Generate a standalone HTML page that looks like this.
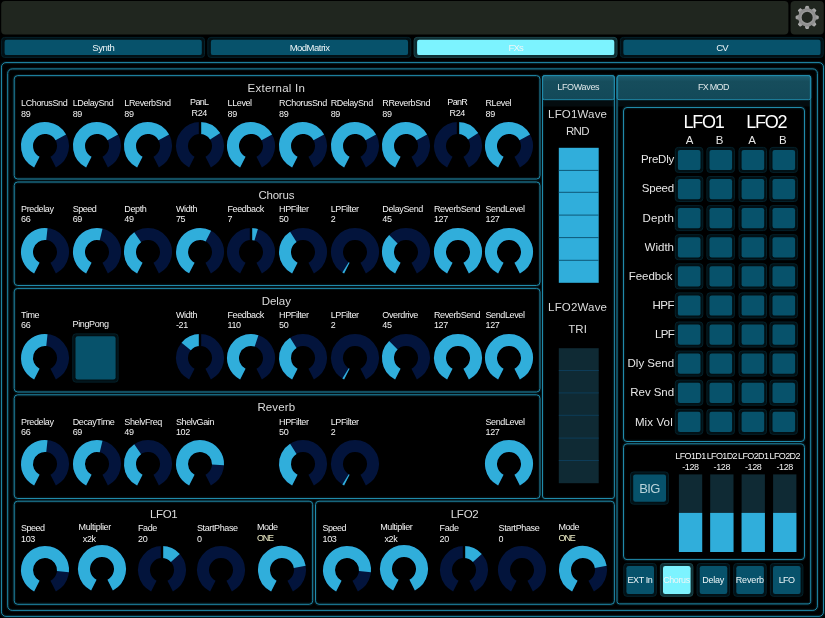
<!DOCTYPE html><html><head><meta charset="utf-8"><style>
*{box-sizing:border-box;margin:0;padding:0}
html,body{width:825px;height:618px;background:#000;overflow:hidden}
body{position:relative;font-family:"Liberation Sans",sans-serif;color:#f2f2f2}
.pn{position:absolute;border:1px solid #208aaa;border-radius:4px}
.box{position:absolute;border:1px solid #208aaa;border-radius:3px}
.hd{position:absolute;border:1px solid #208aaa;border-radius:3px 3px 0 0;background:linear-gradient(#0c4558,#125269);font-size:9px;line-height:23px;text-align:center;color:#e8f0f2}
.sh{position:absolute;background:#04141a}
.k{position:absolute}
.ct{position:absolute;white-space:nowrap;will-change:transform}
.lb,.tt,.wt,.big,.ab,.rl,.bt,.hd{will-change:transform}
.lb{position:absolute;font-size:9px;line-height:10px;white-space:nowrap;letter-spacing:-0.38px;color:#f4f4f4}
.lb.c{text-align:center}
.y{color:#ecebc6}
.tt{position:absolute;font-size:11.2px;line-height:14px;text-align:center;color:#dcdcdc;letter-spacing:0.4px;margin-left:-1.5px;margin-top:0.6px}
.wt{position:absolute;font-size:12px;line-height:14px;text-align:center;color:#dcdcdc;letter-spacing:-0.3px}
.big{position:absolute;font-size:18px;line-height:20px;text-align:center;color:#fff;letter-spacing:-0.8px}
.ab{position:absolute;font-size:11px;line-height:12px;text-align:center;color:#e6e6e6}
.rl{position:absolute;font-size:12px;line-height:14px;text-align:right;color:#e6e6e6;letter-spacing:-0.3px}
.bo{position:absolute;background:#03181f;border-radius:3px}
.bo.on{background:#143a40}
.bi{position:absolute;background:#07526b;border-radius:2px}
.bi.on{background:#7cf3ff}
.bt{font-size:9px;text-align:center;color:#eef6f8;letter-spacing:-0.2px;white-space:nowrap}
</style></head><body>
<svg style="position:absolute;left:0;top:0" width="825" height="618" viewBox="0 0 825 618"><rect x="72.80" y="333.90" width="45.30" height="48.20" rx="3" fill="#021015" stroke="#04212a"/><rect x="75.50" y="336.20" width="40.10" height="43.20" rx="2.2" fill="#07526b"/><defs><linearGradient id="hg" x1="0" y1="0" x2="0" y2="1"><stop offset="0" stop-color="#1d5d70"/><stop offset="0.25" stop-color="#164d5c"/><stop offset="1" stop-color="#134959"/></linearGradient></defs><rect x="543" y="100.2" width="71" height="6.3" fill="#040c0f"/><rect x="542.5" y="75.5" width="71.9" height="24.2" rx="2" fill="url(#hg)" stroke="#208aaa"/><rect x="558.8" y="147.8" width="39.9" height="135" fill="#30aedb"/><rect x="558.8" y="169.9" width="39.9" height="1" fill="#0e5878"/><rect x="558.8" y="191.8" width="39.9" height="1" fill="#0e5878"/><rect x="558.8" y="214.6" width="39.9" height="1" fill="#0e5878"/><rect x="558.8" y="237.1" width="39.9" height="1" fill="#0e5878"/><rect x="558.8" y="259.8" width="39.9" height="1" fill="#0e5878"/><rect x="558.8" y="348.2" width="39.9" height="135" fill="#0f2a34"/><rect x="558.8" y="370.0" width="39.9" height="1" fill="#0d3c58"/><rect x="558.8" y="392.4" width="39.9" height="1" fill="#0d3c58"/><rect x="558.8" y="414.8" width="39.9" height="1" fill="#0d3c58"/><rect x="558.8" y="437.6" width="39.9" height="1" fill="#0d3c58"/><rect x="558.8" y="460.0" width="39.9" height="1" fill="#0d3c58"/><rect x="617.5" y="100.2" width="193" height="6.3" fill="#040c0f"/><rect x="617.0" y="75.5" width="193.7" height="24.2" rx="2" fill="url(#hg)" stroke="#208aaa"/><rect x="675.30" y="147.40" width="27.50" height="25.00" rx="3" fill="#021015" stroke="#04212a"/><rect x="677.90" y="149.90" width="22.60" height="20.20" rx="2.2" fill="#07526b"/><rect x="706.90" y="147.40" width="27.50" height="25.00" rx="3" fill="#021015" stroke="#04212a"/><rect x="709.50" y="149.90" width="22.60" height="20.20" rx="2.2" fill="#07526b"/><rect x="739.00" y="147.40" width="27.50" height="25.00" rx="3" fill="#021015" stroke="#04212a"/><rect x="741.60" y="149.90" width="22.60" height="20.20" rx="2.2" fill="#07526b"/><rect x="769.90" y="147.40" width="27.50" height="25.00" rx="3" fill="#021015" stroke="#04212a"/><rect x="772.50" y="149.90" width="22.60" height="20.20" rx="2.2" fill="#07526b"/><rect x="675.30" y="176.50" width="27.50" height="25.00" rx="3" fill="#021015" stroke="#04212a"/><rect x="677.90" y="179.00" width="22.60" height="20.20" rx="2.2" fill="#07526b"/><rect x="706.90" y="176.50" width="27.50" height="25.00" rx="3" fill="#021015" stroke="#04212a"/><rect x="709.50" y="179.00" width="22.60" height="20.20" rx="2.2" fill="#07526b"/><rect x="739.00" y="176.50" width="27.50" height="25.00" rx="3" fill="#021015" stroke="#04212a"/><rect x="741.60" y="179.00" width="22.60" height="20.20" rx="2.2" fill="#07526b"/><rect x="769.90" y="176.50" width="27.50" height="25.00" rx="3" fill="#021015" stroke="#04212a"/><rect x="772.50" y="179.00" width="22.60" height="20.20" rx="2.2" fill="#07526b"/><rect x="675.30" y="205.60" width="27.50" height="25.00" rx="3" fill="#021015" stroke="#04212a"/><rect x="677.90" y="208.10" width="22.60" height="20.20" rx="2.2" fill="#07526b"/><rect x="706.90" y="205.60" width="27.50" height="25.00" rx="3" fill="#021015" stroke="#04212a"/><rect x="709.50" y="208.10" width="22.60" height="20.20" rx="2.2" fill="#07526b"/><rect x="739.00" y="205.60" width="27.50" height="25.00" rx="3" fill="#021015" stroke="#04212a"/><rect x="741.60" y="208.10" width="22.60" height="20.20" rx="2.2" fill="#07526b"/><rect x="769.90" y="205.60" width="27.50" height="25.00" rx="3" fill="#021015" stroke="#04212a"/><rect x="772.50" y="208.10" width="22.60" height="20.20" rx="2.2" fill="#07526b"/><rect x="675.30" y="234.70" width="27.50" height="25.00" rx="3" fill="#021015" stroke="#04212a"/><rect x="677.90" y="237.20" width="22.60" height="20.20" rx="2.2" fill="#07526b"/><rect x="706.90" y="234.70" width="27.50" height="25.00" rx="3" fill="#021015" stroke="#04212a"/><rect x="709.50" y="237.20" width="22.60" height="20.20" rx="2.2" fill="#07526b"/><rect x="739.00" y="234.70" width="27.50" height="25.00" rx="3" fill="#021015" stroke="#04212a"/><rect x="741.60" y="237.20" width="22.60" height="20.20" rx="2.2" fill="#07526b"/><rect x="769.90" y="234.70" width="27.50" height="25.00" rx="3" fill="#021015" stroke="#04212a"/><rect x="772.50" y="237.20" width="22.60" height="20.20" rx="2.2" fill="#07526b"/><rect x="675.30" y="263.80" width="27.50" height="25.00" rx="3" fill="#021015" stroke="#04212a"/><rect x="677.90" y="266.30" width="22.60" height="20.20" rx="2.2" fill="#07526b"/><rect x="706.90" y="263.80" width="27.50" height="25.00" rx="3" fill="#021015" stroke="#04212a"/><rect x="709.50" y="266.30" width="22.60" height="20.20" rx="2.2" fill="#07526b"/><rect x="739.00" y="263.80" width="27.50" height="25.00" rx="3" fill="#021015" stroke="#04212a"/><rect x="741.60" y="266.30" width="22.60" height="20.20" rx="2.2" fill="#07526b"/><rect x="769.90" y="263.80" width="27.50" height="25.00" rx="3" fill="#021015" stroke="#04212a"/><rect x="772.50" y="266.30" width="22.60" height="20.20" rx="2.2" fill="#07526b"/><rect x="675.30" y="292.90" width="27.50" height="25.00" rx="3" fill="#021015" stroke="#04212a"/><rect x="677.90" y="295.40" width="22.60" height="20.20" rx="2.2" fill="#07526b"/><rect x="706.90" y="292.90" width="27.50" height="25.00" rx="3" fill="#021015" stroke="#04212a"/><rect x="709.50" y="295.40" width="22.60" height="20.20" rx="2.2" fill="#07526b"/><rect x="739.00" y="292.90" width="27.50" height="25.00" rx="3" fill="#021015" stroke="#04212a"/><rect x="741.60" y="295.40" width="22.60" height="20.20" rx="2.2" fill="#07526b"/><rect x="769.90" y="292.90" width="27.50" height="25.00" rx="3" fill="#021015" stroke="#04212a"/><rect x="772.50" y="295.40" width="22.60" height="20.20" rx="2.2" fill="#07526b"/><rect x="675.30" y="322.00" width="27.50" height="25.00" rx="3" fill="#021015" stroke="#04212a"/><rect x="677.90" y="324.50" width="22.60" height="20.20" rx="2.2" fill="#07526b"/><rect x="706.90" y="322.00" width="27.50" height="25.00" rx="3" fill="#021015" stroke="#04212a"/><rect x="709.50" y="324.50" width="22.60" height="20.20" rx="2.2" fill="#07526b"/><rect x="739.00" y="322.00" width="27.50" height="25.00" rx="3" fill="#021015" stroke="#04212a"/><rect x="741.60" y="324.50" width="22.60" height="20.20" rx="2.2" fill="#07526b"/><rect x="769.90" y="322.00" width="27.50" height="25.00" rx="3" fill="#021015" stroke="#04212a"/><rect x="772.50" y="324.50" width="22.60" height="20.20" rx="2.2" fill="#07526b"/><rect x="675.30" y="351.10" width="27.50" height="25.00" rx="3" fill="#021015" stroke="#04212a"/><rect x="677.90" y="353.60" width="22.60" height="20.20" rx="2.2" fill="#07526b"/><rect x="706.90" y="351.10" width="27.50" height="25.00" rx="3" fill="#021015" stroke="#04212a"/><rect x="709.50" y="353.60" width="22.60" height="20.20" rx="2.2" fill="#07526b"/><rect x="739.00" y="351.10" width="27.50" height="25.00" rx="3" fill="#021015" stroke="#04212a"/><rect x="741.60" y="353.60" width="22.60" height="20.20" rx="2.2" fill="#07526b"/><rect x="769.90" y="351.10" width="27.50" height="25.00" rx="3" fill="#021015" stroke="#04212a"/><rect x="772.50" y="353.60" width="22.60" height="20.20" rx="2.2" fill="#07526b"/><rect x="675.30" y="380.20" width="27.50" height="25.00" rx="3" fill="#021015" stroke="#04212a"/><rect x="677.90" y="382.70" width="22.60" height="20.20" rx="2.2" fill="#07526b"/><rect x="706.90" y="380.20" width="27.50" height="25.00" rx="3" fill="#021015" stroke="#04212a"/><rect x="709.50" y="382.70" width="22.60" height="20.20" rx="2.2" fill="#07526b"/><rect x="739.00" y="380.20" width="27.50" height="25.00" rx="3" fill="#021015" stroke="#04212a"/><rect x="741.60" y="382.70" width="22.60" height="20.20" rx="2.2" fill="#07526b"/><rect x="769.90" y="380.20" width="27.50" height="25.00" rx="3" fill="#021015" stroke="#04212a"/><rect x="772.50" y="382.70" width="22.60" height="20.20" rx="2.2" fill="#07526b"/><rect x="675.30" y="409.30" width="27.50" height="25.00" rx="3" fill="#021015" stroke="#04212a"/><rect x="677.90" y="411.80" width="22.60" height="20.20" rx="2.2" fill="#07526b"/><rect x="706.90" y="409.30" width="27.50" height="25.00" rx="3" fill="#021015" stroke="#04212a"/><rect x="709.50" y="411.80" width="22.60" height="20.20" rx="2.2" fill="#07526b"/><rect x="739.00" y="409.30" width="27.50" height="25.00" rx="3" fill="#021015" stroke="#04212a"/><rect x="741.60" y="411.80" width="22.60" height="20.20" rx="2.2" fill="#07526b"/><rect x="769.90" y="409.30" width="27.50" height="25.00" rx="3" fill="#021015" stroke="#04212a"/><rect x="772.50" y="411.80" width="22.60" height="20.20" rx="2.2" fill="#07526b"/><rect x="678.9" y="474.4" width="23.3" height="77.6" fill="#0f2a34"/><rect x="678.9" y="512.9" width="23.3" height="39.1" fill="#30aedb"/><rect x="710.2" y="474.4" width="23.3" height="77.6" fill="#0f2a34"/><rect x="710.2" y="512.9" width="23.3" height="39.1" fill="#30aedb"/><rect x="741.6" y="474.4" width="23.3" height="77.6" fill="#0f2a34"/><rect x="741.6" y="512.9" width="23.3" height="39.1" fill="#30aedb"/><rect x="773.1" y="474.4" width="23.3" height="77.6" fill="#0f2a34"/><rect x="773.1" y="512.9" width="23.3" height="39.1" fill="#30aedb"/><rect x="630.50" y="472.00" width="37.90" height="32.20" rx="3" fill="#021015" stroke="#04212a"/><rect x="633.20" y="474.40" width="32.80" height="27.40" rx="2.2" fill="#07526b"/><rect x="623.80" y="563.50" width="32.50" height="32.80" rx="3" fill="#021015" stroke="#04212a"/><rect x="626.40" y="566.00" width="27.60" height="28.00" rx="2.2" fill="#07526b"/><rect x="660.40" y="563.50" width="32.50" height="32.80" rx="3" fill="#0e2e33" stroke="#1b4349"/><rect x="663.00" y="566.00" width="27.60" height="28.00" rx="2.2" fill="#7cf3ff"/><rect x="697.10" y="563.50" width="32.50" height="32.80" rx="3" fill="#021015" stroke="#04212a"/><rect x="699.70" y="566.00" width="27.60" height="28.00" rx="2.2" fill="#07526b"/><rect x="733.70" y="563.50" width="32.50" height="32.80" rx="3" fill="#021015" stroke="#04212a"/><rect x="736.30" y="566.00" width="27.60" height="28.00" rx="2.2" fill="#07526b"/><rect x="770.40" y="563.50" width="32.50" height="32.80" rx="3" fill="#021015" stroke="#04212a"/><rect x="773.00" y="566.00" width="27.60" height="28.00" rx="2.2" fill="#07526b"/><rect x="1.2" y="1" width="787.2" height="33.4" rx="4" fill="#20261f"/><rect x="790.6" y="1" width="33.2" height="33.4" rx="4" fill="#20261f"/><defs><radialGradient id="gg" cx="0" cy="0" r="11.6" gradientUnits="userSpaceOnUse"><stop offset="0.48" stop-color="#9e9e9e"/><stop offset="0.68" stop-color="#8a8a8a"/><stop offset="1" stop-color="#b6b6b6"/></radialGradient></defs><g transform="translate(807.15,17.4)" fill="url(#gg)" stroke="url(#gg)"><polygon points="-1.9,-8.4 -1.2,-11.0 1.2,-11.0 1.9,-8.4" stroke-width="1.0" stroke-linejoin="round" transform="rotate(0)"/><polygon points="-1.9,-8.4 -1.2,-11.0 1.2,-11.0 1.9,-8.4" stroke-width="1.0" stroke-linejoin="round" transform="rotate(45)"/><polygon points="-1.9,-8.4 -1.2,-11.0 1.2,-11.0 1.9,-8.4" stroke-width="1.0" stroke-linejoin="round" transform="rotate(90)"/><polygon points="-1.9,-8.4 -1.2,-11.0 1.2,-11.0 1.9,-8.4" stroke-width="1.0" stroke-linejoin="round" transform="rotate(135)"/><polygon points="-1.9,-8.4 -1.2,-11.0 1.2,-11.0 1.9,-8.4" stroke-width="1.0" stroke-linejoin="round" transform="rotate(180)"/><polygon points="-1.9,-8.4 -1.2,-11.0 1.2,-11.0 1.9,-8.4" stroke-width="1.0" stroke-linejoin="round" transform="rotate(225)"/><polygon points="-1.9,-8.4 -1.2,-11.0 1.2,-11.0 1.9,-8.4" stroke-width="1.0" stroke-linejoin="round" transform="rotate(270)"/><polygon points="-1.9,-8.4 -1.2,-11.0 1.2,-11.0 1.9,-8.4" stroke-width="1.0" stroke-linejoin="round" transform="rotate(315)"/><circle r="7.3" fill="none" stroke-width="3.5"/></g><rect x="1.60" y="37.40" width="202.90" height="20.00" rx="3" fill="#021015" stroke="#04212a"/><rect x="4.60" y="39.80" width="197.20" height="15.30" rx="2.2" fill="#07526b"/><rect x="207.85" y="37.40" width="202.90" height="20.00" rx="3" fill="#021015" stroke="#04212a"/><rect x="210.85" y="39.80" width="197.20" height="15.30" rx="2.2" fill="#07526b"/><rect x="414.10" y="37.40" width="202.90" height="20.00" rx="3" fill="#0e2e33" stroke="#1b4349"/><rect x="417.10" y="39.80" width="197.20" height="15.30" rx="2.2" fill="#7cf3ff"/><rect x="620.35" y="37.40" width="202.90" height="20.00" rx="3" fill="#021015" stroke="#04212a"/><rect x="623.35" y="39.80" width="197.20" height="15.30" rx="2.2" fill="#07526b"/></svg>
<svg style="position:absolute;left:0;top:0" width="825" height="618" viewBox="0 0 825 618" fill="none" stroke="#208aaa" stroke-width="1"><g stroke-width="3.4" opacity="0.13"><rect x="14.20" y="75.60" width="525.80" height="103.40" rx="3.5"/><rect x="14.20" y="182.00" width="525.80" height="103.50" rx="3.5"/><rect x="14.20" y="288.40" width="525.80" height="103.60" rx="3.5"/><rect x="14.20" y="394.80" width="525.80" height="103.70" rx="3.5"/><rect x="14.20" y="501.20" width="298.50" height="103.10" rx="3.5"/><rect x="315.50" y="501.20" width="298.90" height="103.10" rx="3.5"/><rect x="542.50" y="75.50" width="71.90" height="423.00" rx="2.5"/><rect x="617.00" y="75.50" width="193.70" height="528.40" rx="2.5"/><rect x="623.50" y="107.50" width="181.00" height="334.00" rx="3.5"/><rect x="623.50" y="443.80" width="181.00" height="115.80" rx="3.5"/><rect x="1.46" y="62.60" width="822.04" height="553.80" rx="4.5"/><rect x="7.70" y="68.90" width="809.70" height="541.50" rx="4.5"/></g><rect x="14.20" y="75.60" width="525.80" height="103.40" rx="3.5"/><rect x="14.20" y="182.00" width="525.80" height="103.50" rx="3.5"/><rect x="14.20" y="288.40" width="525.80" height="103.60" rx="3.5"/><rect x="14.20" y="394.80" width="525.80" height="103.70" rx="3.5"/><rect x="14.20" y="501.20" width="298.50" height="103.10" rx="3.5"/><rect x="315.50" y="501.20" width="298.90" height="103.10" rx="3.5"/><rect x="542.50" y="75.50" width="71.90" height="423.00" rx="2.5"/><rect x="617.00" y="75.50" width="193.70" height="528.40" rx="2.5"/><rect x="623.50" y="107.50" width="181.00" height="334.00" rx="3.5"/><rect x="623.50" y="443.80" width="181.00" height="115.80" rx="3.5"/><rect x="1.46" y="62.60" width="822.04" height="553.80" rx="4.5"/><rect x="7.70" y="68.90" width="809.70" height="541.50" rx="4.5"/></svg>
<div class="ct" style="left:247px;top:80px;font-size:11.5px;line-height:15px;letter-spacing:0.22px;color:#dcdcdc;transform:translate(0.60px,0.80px)">External In</div>
<svg class="k" style="left:19.0px;top:120.15px" width="52" height="52" viewBox="0 0 52 52"><path d="M17.83 42.04A18 18 0 1 1 34.17 42.04" stroke="#03143c" stroke-width="12" fill="none"/><path d="M17.83 42.04A18 18 0 1 1 41.81 17.39" stroke="#30aedb" stroke-width="12" fill="none"/></svg>
<div class="lb " style="left:21px;top:98px;transform:translate(0.10px,0.00px)">LChorusSnd</div>
<div class="lb " style="left:21px;top:108px;transform:translate(0.10px,0.50px)">89</div>
<svg class="k" style="left:70.6px;top:120.15px" width="52" height="52" viewBox="0 0 52 52"><path d="M17.83 42.04A18 18 0 1 1 34.17 42.04" stroke="#03143c" stroke-width="12" fill="none"/><path d="M17.83 42.04A18 18 0 1 1 41.81 17.39" stroke="#30aedb" stroke-width="12" fill="none"/></svg>
<div class="lb " style="left:72px;top:98px;transform:translate(0.70px,0.00px)">LDelaySnd</div>
<div class="lb " style="left:72px;top:108px;transform:translate(0.70px,0.50px)">89</div>
<svg class="k" style="left:122.19999999999999px;top:120.15px" width="52" height="52" viewBox="0 0 52 52"><path d="M17.83 42.04A18 18 0 1 1 34.17 42.04" stroke="#03143c" stroke-width="12" fill="none"/><path d="M17.83 42.04A18 18 0 1 1 41.81 17.39" stroke="#30aedb" stroke-width="12" fill="none"/></svg>
<div class="lb " style="left:124px;top:98px;transform:translate(0.30px,0.00px)">LReverbSnd</div>
<div class="lb " style="left:124px;top:108px;transform:translate(0.30px,0.50px)">89</div>
<svg class="k" style="left:173.8px;top:120.15px" width="52" height="52" viewBox="0 0 52 52"><path d="M17.83 42.04A18 18 0 1 1 34.17 42.04" stroke="#03143c" stroke-width="12" fill="none"/><path d="M26.00 8.00A18 18 0 0 1 41.16 16.30" stroke="#30aedb" stroke-width="12" fill="none"/><rect x="24.8" y="1" width="2.4" height="14" fill="#000"/></svg>
<div class="lb c " style="left:169px;top:97px;width:60px;transform:translate(0.20px,0.00px);letter-spacing:-0.7px">PanL</div>
<div class="lb c " style="left:169px;top:108px;width:60px;transform:translate(0.20px,0.00px)">R24</div>
<svg class="k" style="left:225.4px;top:120.15px" width="52" height="52" viewBox="0 0 52 52"><path d="M17.83 42.04A18 18 0 1 1 34.17 42.04" stroke="#03143c" stroke-width="12" fill="none"/><path d="M17.83 42.04A18 18 0 1 1 41.81 17.39" stroke="#30aedb" stroke-width="12" fill="none"/></svg>
<div class="lb " style="left:227px;top:98px;transform:translate(0.50px,0.00px)">LLevel</div>
<div class="lb " style="left:227px;top:108px;transform:translate(0.50px,0.50px)">89</div>
<svg class="k" style="left:277.0px;top:120.15px" width="52" height="52" viewBox="0 0 52 52"><path d="M17.83 42.04A18 18 0 1 1 34.17 42.04" stroke="#03143c" stroke-width="12" fill="none"/><path d="M17.83 42.04A18 18 0 1 1 41.81 17.39" stroke="#30aedb" stroke-width="12" fill="none"/></svg>
<div class="lb " style="left:279px;top:98px;transform:translate(0.10px,0.00px)">RChorusSnd</div>
<div class="lb " style="left:279px;top:108px;transform:translate(0.10px,0.50px)">89</div>
<svg class="k" style="left:328.6px;top:120.15px" width="52" height="52" viewBox="0 0 52 52"><path d="M17.83 42.04A18 18 0 1 1 34.17 42.04" stroke="#03143c" stroke-width="12" fill="none"/><path d="M17.83 42.04A18 18 0 1 1 41.81 17.39" stroke="#30aedb" stroke-width="12" fill="none"/></svg>
<div class="lb " style="left:330px;top:98px;transform:translate(0.70px,0.00px)">RDelaySnd</div>
<div class="lb " style="left:330px;top:108px;transform:translate(0.70px,0.50px)">89</div>
<svg class="k" style="left:380.2px;top:120.15px" width="52" height="52" viewBox="0 0 52 52"><path d="M17.83 42.04A18 18 0 1 1 34.17 42.04" stroke="#03143c" stroke-width="12" fill="none"/><path d="M17.83 42.04A18 18 0 1 1 41.81 17.39" stroke="#30aedb" stroke-width="12" fill="none"/></svg>
<div class="lb " style="left:382px;top:98px;transform:translate(0.30px,0.00px)">RReverbSnd</div>
<div class="lb " style="left:382px;top:108px;transform:translate(0.30px,0.50px)">89</div>
<svg class="k" style="left:431.8px;top:120.15px" width="52" height="52" viewBox="0 0 52 52"><path d="M17.83 42.04A18 18 0 1 1 34.17 42.04" stroke="#03143c" stroke-width="12" fill="none"/><path d="M26.00 8.00A18 18 0 0 1 41.16 16.30" stroke="#30aedb" stroke-width="12" fill="none"/><rect x="24.8" y="1" width="2.4" height="14" fill="#000"/></svg>
<div class="lb c " style="left:427px;top:97px;width:60px;transform:translate(0.20px,0.00px);letter-spacing:-0.7px">PanR</div>
<div class="lb c " style="left:427px;top:108px;width:60px;transform:translate(0.20px,0.00px)">R24</div>
<svg class="k" style="left:483.40000000000003px;top:120.15px" width="52" height="52" viewBox="0 0 52 52"><path d="M17.83 42.04A18 18 0 1 1 34.17 42.04" stroke="#03143c" stroke-width="12" fill="none"/><path d="M17.83 42.04A18 18 0 1 1 41.81 17.39" stroke="#30aedb" stroke-width="12" fill="none"/></svg>
<div class="lb " style="left:485px;top:98px;transform:translate(0.50px,0.00px)">RLevel</div>
<div class="lb " style="left:485px;top:108px;transform:translate(0.50px,0.50px)">89</div>
<div class="ct" style="left:258px;top:187px;font-size:11.5px;line-height:15px;letter-spacing:-0.21px;color:#dcdcdc;transform:translate(0.40px,0.80px)">Chorus</div>
<svg class="k" style="left:19.0px;top:226.15px" width="52" height="52" viewBox="0 0 52 52"><path d="M17.83 42.04A18 18 0 1 1 34.17 42.04" stroke="#03143c" stroke-width="12" fill="none"/><path d="M17.83 42.04A18 18 0 0 1 27.89 8.10" stroke="#30aedb" stroke-width="12" fill="none"/></svg>
<div class="lb " style="left:21px;top:204px;transform:translate(0.10px,0.20px)">Predelay</div>
<div class="lb " style="left:21px;top:214px;transform:translate(0.10px,0.30px)">66</div>
<svg class="k" style="left:70.6px;top:226.15px" width="52" height="52" viewBox="0 0 52 52"><path d="M17.83 42.04A18 18 0 1 1 34.17 42.04" stroke="#03143c" stroke-width="12" fill="none"/><path d="M17.83 42.04A18 18 0 0 1 30.13 8.48" stroke="#30aedb" stroke-width="12" fill="none"/></svg>
<div class="lb " style="left:72px;top:204px;transform:translate(0.70px,0.20px);letter-spacing:-0.5px">Speed</div>
<div class="lb " style="left:72px;top:214px;transform:translate(0.70px,0.30px)">69</div>
<svg class="k" style="left:122.19999999999999px;top:226.15px" width="52" height="52" viewBox="0 0 52 52"><path d="M17.83 42.04A18 18 0 1 1 34.17 42.04" stroke="#03143c" stroke-width="12" fill="none"/><path d="M17.83 42.04A18 18 0 0 1 15.69 11.24" stroke="#30aedb" stroke-width="12" fill="none"/></svg>
<div class="lb " style="left:124px;top:204px;transform:translate(0.30px,0.20px)">Depth</div>
<div class="lb " style="left:124px;top:214px;transform:translate(0.30px,0.30px)">49</div>
<svg class="k" style="left:173.8px;top:226.15px" width="52" height="52" viewBox="0 0 52 52"><path d="M17.83 42.04A18 18 0 1 1 34.17 42.04" stroke="#03143c" stroke-width="12" fill="none"/><path d="M17.83 42.04A18 18 0 1 1 34.37 10.06" stroke="#30aedb" stroke-width="12" fill="none"/></svg>
<div class="lb " style="left:175px;top:204px;transform:translate(0.90px,0.20px)">Width</div>
<div class="lb " style="left:175px;top:214px;transform:translate(0.90px,0.30px)">75</div>
<svg class="k" style="left:225.4px;top:226.15px" width="52" height="52" viewBox="0 0 52 52"><path d="M17.83 42.04A18 18 0 1 1 34.17 42.04" stroke="#03143c" stroke-width="12" fill="none"/><path d="M26.00 8.00A18 18 0 0 1 31.18 8.76" stroke="#30aedb" stroke-width="12" fill="none"/><rect x="24.8" y="1" width="2.4" height="14" fill="#000"/></svg>
<div class="lb " style="left:227px;top:204px;transform:translate(0.50px,0.20px)">Feedback</div>
<div class="lb " style="left:227px;top:214px;transform:translate(0.50px,0.30px)">7</div>
<svg class="k" style="left:277.0px;top:226.15px" width="52" height="52" viewBox="0 0 52 52"><path d="M17.83 42.04A18 18 0 1 1 34.17 42.04" stroke="#03143c" stroke-width="12" fill="none"/><path d="M17.83 42.04A18 18 0 0 1 16.32 10.82" stroke="#30aedb" stroke-width="12" fill="none"/></svg>
<div class="lb " style="left:279px;top:204px;transform:translate(0.10px,0.20px)">HPFilter</div>
<div class="lb " style="left:279px;top:214px;transform:translate(0.10px,0.30px)">50</div>
<svg class="k" style="left:328.6px;top:226.15px" width="52" height="52" viewBox="0 0 52 52"><path d="M17.83 42.04A18 18 0 1 1 34.17 42.04" stroke="#03143c" stroke-width="12" fill="none"/><path d="M17.83 42.04A18 18 0 0 1 16.51 41.29" stroke="#30aedb" stroke-width="12" fill="none"/></svg>
<div class="lb " style="left:330px;top:204px;transform:translate(0.70px,0.20px)">LPFilter</div>
<div class="lb " style="left:330px;top:214px;transform:translate(0.70px,0.30px)">2</div>
<svg class="k" style="left:380.2px;top:226.15px" width="52" height="52" viewBox="0 0 52 52"><path d="M17.83 42.04A18 18 0 1 1 34.17 42.04" stroke="#03143c" stroke-width="12" fill="none"/><path d="M17.83 42.04A18 18 0 0 1 13.37 13.18" stroke="#30aedb" stroke-width="12" fill="none"/></svg>
<div class="lb " style="left:382px;top:204px;transform:translate(0.30px,0.20px)">DelaySend</div>
<div class="lb " style="left:382px;top:214px;transform:translate(0.30px,0.30px)">45</div>
<svg class="k" style="left:431.8px;top:226.15px" width="52" height="52" viewBox="0 0 52 52"><path d="M17.83 42.04A18 18 0 1 1 34.17 42.04" stroke="#03143c" stroke-width="12" fill="none"/><path d="M17.83 42.04A18 18 0 1 1 34.17 42.04" stroke="#30aedb" stroke-width="12" fill="none"/></svg>
<div class="lb " style="left:433px;top:204px;transform:translate(0.90px,0.20px)">ReverbSend</div>
<div class="lb " style="left:433px;top:214px;transform:translate(0.90px,0.30px)">127</div>
<svg class="k" style="left:483.40000000000003px;top:226.15px" width="52" height="52" viewBox="0 0 52 52"><path d="M17.83 42.04A18 18 0 1 1 34.17 42.04" stroke="#03143c" stroke-width="12" fill="none"/><path d="M17.83 42.04A18 18 0 1 1 34.17 42.04" stroke="#30aedb" stroke-width="12" fill="none"/></svg>
<div class="lb " style="left:485px;top:204px;transform:translate(0.50px,0.20px)">SendLevel</div>
<div class="lb " style="left:485px;top:214px;transform:translate(0.50px,0.30px)">127</div>
<div class="ct" style="left:261px;top:294px;font-size:11.5px;line-height:15px;letter-spacing:-0.08px;color:#dcdcdc;transform:translate(0.80px,0.10px)">Delay</div>
<svg class="k" style="left:19.0px;top:332.15px" width="52" height="52" viewBox="0 0 52 52"><path d="M17.83 42.04A18 18 0 1 1 34.17 42.04" stroke="#03143c" stroke-width="12" fill="none"/><path d="M17.83 42.04A18 18 0 0 1 27.89 8.10" stroke="#30aedb" stroke-width="12" fill="none"/></svg>
<div class="lb " style="left:21px;top:310px;transform:translate(0.10px,0.20px)">Time</div>
<div class="lb " style="left:21px;top:320px;transform:translate(0.10px,0.30px)">66</div>
<svg class="k" style="left:173.8px;top:332.15px" width="52" height="52" viewBox="0 0 52 52"><path d="M17.83 42.04A18 18 0 1 1 34.17 42.04" stroke="#03143c" stroke-width="12" fill="none"/><path d="M12.17 14.48A18 18 0 0 1 26.00 8.00" stroke="#30aedb" stroke-width="12" fill="none"/><rect x="24.8" y="1" width="2.4" height="14" fill="#000"/></svg>
<div class="lb " style="left:175px;top:310px;transform:translate(0.90px,0.20px)">Width</div>
<div class="lb " style="left:175px;top:320px;transform:translate(0.90px,0.30px)">-21</div>
<svg class="k" style="left:225.4px;top:332.15px" width="52" height="52" viewBox="0 0 52 52"><path d="M17.83 42.04A18 18 0 1 1 34.17 42.04" stroke="#03143c" stroke-width="12" fill="none"/><path d="M17.83 42.04A18 18 0 0 1 31.56 8.88" stroke="#30aedb" stroke-width="12" fill="none"/></svg>
<div class="lb " style="left:227px;top:310px;transform:translate(0.50px,0.20px)">Feedback</div>
<div class="lb " style="left:227px;top:320px;transform:translate(0.50px,0.30px)">110</div>
<svg class="k" style="left:277.0px;top:332.15px" width="52" height="52" viewBox="0 0 52 52"><path d="M17.83 42.04A18 18 0 1 1 34.17 42.04" stroke="#03143c" stroke-width="12" fill="none"/><path d="M17.83 42.04A18 18 0 0 1 16.32 10.82" stroke="#30aedb" stroke-width="12" fill="none"/></svg>
<div class="lb " style="left:279px;top:310px;transform:translate(0.10px,0.20px)">HPFilter</div>
<div class="lb " style="left:279px;top:320px;transform:translate(0.10px,0.30px)">50</div>
<svg class="k" style="left:328.6px;top:332.15px" width="52" height="52" viewBox="0 0 52 52"><path d="M17.83 42.04A18 18 0 1 1 34.17 42.04" stroke="#03143c" stroke-width="12" fill="none"/><path d="M17.83 42.04A18 18 0 0 1 16.51 41.29" stroke="#30aedb" stroke-width="12" fill="none"/></svg>
<div class="lb " style="left:330px;top:310px;transform:translate(0.70px,0.20px)">LPFilter</div>
<div class="lb " style="left:330px;top:320px;transform:translate(0.70px,0.30px)">2</div>
<svg class="k" style="left:380.2px;top:332.15px" width="52" height="52" viewBox="0 0 52 52"><path d="M17.83 42.04A18 18 0 1 1 34.17 42.04" stroke="#03143c" stroke-width="12" fill="none"/><path d="M17.83 42.04A18 18 0 0 1 13.37 13.18" stroke="#30aedb" stroke-width="12" fill="none"/></svg>
<div class="lb " style="left:382px;top:310px;transform:translate(0.30px,0.20px)">Overdrive</div>
<div class="lb " style="left:382px;top:320px;transform:translate(0.30px,0.30px)">45</div>
<svg class="k" style="left:431.8px;top:332.15px" width="52" height="52" viewBox="0 0 52 52"><path d="M17.83 42.04A18 18 0 1 1 34.17 42.04" stroke="#03143c" stroke-width="12" fill="none"/><path d="M17.83 42.04A18 18 0 1 1 34.17 42.04" stroke="#30aedb" stroke-width="12" fill="none"/></svg>
<div class="lb " style="left:433px;top:310px;transform:translate(0.90px,0.20px)">ReverbSend</div>
<div class="lb " style="left:433px;top:320px;transform:translate(0.90px,0.30px)">127</div>
<svg class="k" style="left:483.40000000000003px;top:332.15px" width="52" height="52" viewBox="0 0 52 52"><path d="M17.83 42.04A18 18 0 1 1 34.17 42.04" stroke="#03143c" stroke-width="12" fill="none"/><path d="M17.83 42.04A18 18 0 1 1 34.17 42.04" stroke="#30aedb" stroke-width="12" fill="none"/></svg>
<div class="lb " style="left:485px;top:310px;transform:translate(0.50px,0.20px)">SendLevel</div>
<div class="lb " style="left:485px;top:320px;transform:translate(0.50px,0.30px)">127</div>
<div class="lb " style="left:72px;top:319px;transform:translate(0.60px,0.00px)">PingPong</div>
<div class="ct" style="left:257px;top:400px;font-size:11.5px;line-height:15px;letter-spacing:0.10px;color:#dcdcdc;transform:translate(0.45px,0.30px)">Reverb</div>
<svg class="k" style="left:19.0px;top:438.15px" width="52" height="52" viewBox="0 0 52 52"><path d="M17.83 42.04A18 18 0 1 1 34.17 42.04" stroke="#03143c" stroke-width="12" fill="none"/><path d="M17.83 42.04A18 18 0 0 1 27.89 8.10" stroke="#30aedb" stroke-width="12" fill="none"/></svg>
<div class="lb " style="left:21px;top:417px;transform:translate(0.10px,0.00px)">Predelay</div>
<div class="lb " style="left:21px;top:427px;transform:translate(0.10px,0.10px)">66</div>
<svg class="k" style="left:70.6px;top:438.15px" width="52" height="52" viewBox="0 0 52 52"><path d="M17.83 42.04A18 18 0 1 1 34.17 42.04" stroke="#03143c" stroke-width="12" fill="none"/><path d="M17.83 42.04A18 18 0 0 1 30.13 8.48" stroke="#30aedb" stroke-width="12" fill="none"/></svg>
<div class="lb " style="left:72px;top:417px;transform:translate(0.70px,0.00px)">DecayTime</div>
<div class="lb " style="left:72px;top:427px;transform:translate(0.70px,0.10px)">69</div>
<svg class="k" style="left:122.19999999999999px;top:438.15px" width="52" height="52" viewBox="0 0 52 52"><path d="M17.83 42.04A18 18 0 1 1 34.17 42.04" stroke="#03143c" stroke-width="12" fill="none"/><path d="M17.83 42.04A18 18 0 0 1 15.69 11.24" stroke="#30aedb" stroke-width="12" fill="none"/></svg>
<div class="lb " style="left:124px;top:417px;transform:translate(0.30px,0.00px)">ShelvFreq</div>
<div class="lb " style="left:124px;top:427px;transform:translate(0.30px,0.10px)">49</div>
<svg class="k" style="left:173.8px;top:438.15px" width="52" height="52" viewBox="0 0 52 52"><path d="M17.83 42.04A18 18 0 1 1 34.17 42.04" stroke="#03143c" stroke-width="12" fill="none"/><path d="M17.83 42.04A18 18 0 1 1 43.98 26.87" stroke="#30aedb" stroke-width="12" fill="none"/></svg>
<div class="lb " style="left:175px;top:417px;transform:translate(0.90px,0.00px)">ShelvGain</div>
<div class="lb " style="left:175px;top:427px;transform:translate(0.90px,0.10px)">102</div>
<svg class="k" style="left:277.0px;top:438.15px" width="52" height="52" viewBox="0 0 52 52"><path d="M17.83 42.04A18 18 0 1 1 34.17 42.04" stroke="#03143c" stroke-width="12" fill="none"/><path d="M17.83 42.04A18 18 0 0 1 16.32 10.82" stroke="#30aedb" stroke-width="12" fill="none"/></svg>
<div class="lb " style="left:279px;top:417px;transform:translate(0.10px,0.00px)">HPFilter</div>
<div class="lb " style="left:279px;top:427px;transform:translate(0.10px,0.10px)">50</div>
<svg class="k" style="left:328.6px;top:438.15px" width="52" height="52" viewBox="0 0 52 52"><path d="M17.83 42.04A18 18 0 1 1 34.17 42.04" stroke="#03143c" stroke-width="12" fill="none"/><path d="M17.83 42.04A18 18 0 0 1 16.51 41.29" stroke="#30aedb" stroke-width="12" fill="none"/></svg>
<div class="lb " style="left:330px;top:417px;transform:translate(0.70px,0.00px)">LPFilter</div>
<div class="lb " style="left:330px;top:427px;transform:translate(0.70px,0.10px)">2</div>
<svg class="k" style="left:483.40000000000003px;top:438.15px" width="52" height="52" viewBox="0 0 52 52"><path d="M17.83 42.04A18 18 0 1 1 34.17 42.04" stroke="#03143c" stroke-width="12" fill="none"/><path d="M17.83 42.04A18 18 0 1 1 34.17 42.04" stroke="#30aedb" stroke-width="12" fill="none"/></svg>
<div class="lb " style="left:485px;top:417px;transform:translate(0.50px,0.00px)">SendLevel</div>
<div class="lb " style="left:485px;top:427px;transform:translate(0.50px,0.10px)">127</div>
<div class="ct" style="left:150px;top:506px;font-size:11.5px;line-height:15px;letter-spacing:-0.39px;color:#dcdcdc;transform:translate(0.00px,0.60px)">LFO1</div>
<svg class="k" style="left:19px;top:544.3px" width="52" height="52" viewBox="0 0 52 52"><path d="M17.83 42.04A18 18 0 1 1 34.17 42.04" stroke="#03143c" stroke-width="12" fill="none"/><path d="M17.83 42.04A18 18 0 1 1 43.93 27.62" stroke="#30aedb" stroke-width="12" fill="none"/></svg>
<div class="lb " style="left:21px;top:522px;transform:translate(0.00px,0.70px);letter-spacing:-0.5px">Speed</div>
<div class="lb " style="left:21px;top:533px;transform:translate(0.00px,0.60px)">103</div>
<svg class="k" style="left:76px;top:543.0px" width="52" height="52" viewBox="0 0 52 52"><path d="M17.83 42.04A18 18 0 1 1 34.17 42.04" stroke="#03143c" stroke-width="12" fill="none"/><path d="M17.83 42.04A18 18 0 1 1 34.17 42.04" stroke="#30aedb" stroke-width="12" fill="none"/></svg>
<div class="lb " style="left:78px;top:522px;transform:translate(0.60px,0.00px)">Multiplier</div>
<div class="lb " style="left:78px;top:533px;transform:translate(0.60px,0.90px)">&nbsp;&nbsp;x2k</div>
<svg class="k" style="left:136px;top:543.8px" width="52" height="52" viewBox="0 0 52 52"><path d="M17.83 42.04A18 18 0 1 1 34.17 42.04" stroke="#03143c" stroke-width="12" fill="none"/><path d="M26.00 8.00A18 18 0 0 1 39.34 13.91" stroke="#30aedb" stroke-width="12" fill="none"/><rect x="24.8" y="1" width="2.4" height="14" fill="#000"/></svg>
<div class="lb " style="left:138px;top:522px;transform:translate(0.00px,0.70px)">Fade</div>
<div class="lb " style="left:138px;top:533px;transform:translate(0.00px,0.60px)">20</div>
<svg class="k" style="left:194.5px;top:543.8px" width="52" height="52" viewBox="0 0 52 52"><path d="M17.83 42.04A18 18 0 1 1 34.17 42.04" stroke="#03143c" stroke-width="12" fill="none"/></svg>
<div class="lb " style="left:197px;top:522px;transform:translate(0.00px,0.70px)">StartPhase</div>
<div class="lb " style="left:197px;top:533px;transform:translate(0.00px,0.60px)">0</div>
<svg class="k" style="left:255.5px;top:544.4px" width="52" height="52" viewBox="0 0 52 52"><path d="M17.83 42.04A18 18 0 1 1 34.17 42.04" stroke="#03143c" stroke-width="12" fill="none"/><path d="M17.83 42.04A18 18 0 1 1 43.73 22.87" stroke="#30aedb" stroke-width="12" fill="none"/></svg>
<div class="lb " style="left:257px;top:522px;letter-spacing:-0.5px">Mode</div>
<div class="lb y" style="left:257px;top:533px;letter-spacing:-1.2px">ONE</div>
<div class="ct" style="left:450px;top:506px;font-size:11.5px;line-height:15px;letter-spacing:-0.24px;color:#dcdcdc;transform:translate(0.70px,0.60px)">LFO2</div>
<svg class="k" style="left:320.6px;top:544.3px" width="52" height="52" viewBox="0 0 52 52"><path d="M17.83 42.04A18 18 0 1 1 34.17 42.04" stroke="#03143c" stroke-width="12" fill="none"/><path d="M17.83 42.04A18 18 0 1 1 43.93 27.62" stroke="#30aedb" stroke-width="12" fill="none"/></svg>
<div class="lb " style="left:322px;top:522px;transform:translate(0.60px,0.70px);letter-spacing:-0.5px">Speed</div>
<div class="lb " style="left:322px;top:533px;transform:translate(0.60px,0.60px)">103</div>
<svg class="k" style="left:377.6px;top:543.0px" width="52" height="52" viewBox="0 0 52 52"><path d="M17.83 42.04A18 18 0 1 1 34.17 42.04" stroke="#03143c" stroke-width="12" fill="none"/><path d="M17.83 42.04A18 18 0 1 1 34.17 42.04" stroke="#30aedb" stroke-width="12" fill="none"/></svg>
<div class="lb " style="left:380px;top:522px;transform:translate(0.20px,0.00px)">Multiplier</div>
<div class="lb " style="left:380px;top:533px;transform:translate(0.20px,0.90px)">&nbsp;&nbsp;x2k</div>
<svg class="k" style="left:437.6px;top:543.8px" width="52" height="52" viewBox="0 0 52 52"><path d="M17.83 42.04A18 18 0 1 1 34.17 42.04" stroke="#03143c" stroke-width="12" fill="none"/><path d="M26.00 8.00A18 18 0 0 1 39.34 13.91" stroke="#30aedb" stroke-width="12" fill="none"/><rect x="24.8" y="1" width="2.4" height="14" fill="#000"/></svg>
<div class="lb " style="left:439px;top:522px;transform:translate(0.60px,0.70px)">Fade</div>
<div class="lb " style="left:439px;top:533px;transform:translate(0.60px,0.60px)">20</div>
<svg class="k" style="left:496.1px;top:543.8px" width="52" height="52" viewBox="0 0 52 52"><path d="M17.83 42.04A18 18 0 1 1 34.17 42.04" stroke="#03143c" stroke-width="12" fill="none"/></svg>
<div class="lb " style="left:498px;top:522px;transform:translate(0.60px,0.70px)">StartPhase</div>
<div class="lb " style="left:498px;top:533px;transform:translate(0.60px,0.60px)">0</div>
<svg class="k" style="left:557.1px;top:544.4px" width="52" height="52" viewBox="0 0 52 52"><path d="M17.83 42.04A18 18 0 1 1 34.17 42.04" stroke="#03143c" stroke-width="12" fill="none"/><path d="M17.83 42.04A18 18 0 1 1 43.73 22.87" stroke="#30aedb" stroke-width="12" fill="none"/></svg>
<div class="lb " style="left:558px;top:522px;transform:translate(0.60px,0.00px);letter-spacing:-0.5px">Mode</div>
<div class="lb y" style="left:558px;top:533px;transform:translate(0.60px,0.00px);letter-spacing:-1.2px">ONE</div>
<div class="ct" style="left:557px;top:80px;font-size:9px;line-height:12px;letter-spacing:-0.33px;color:#dfe7e9;transform:translate(0.20px,0.90px)">LFOWaves</div>
<div class="ct" style="left:548px;top:106px;font-size:11.5px;line-height:15px;letter-spacing:0.16px;color:#dcdcdc;transform:translate(0.10px,0.70px)">LFO1Wave</div>
<div class="ct" style="left:565px;top:123px;font-size:11.5px;line-height:15px;letter-spacing:-0.67px;color:#dcdcdc;transform:translate(0.95px,0.90px)">RND</div>
<div class="ct" style="left:548px;top:299px;font-size:11.5px;line-height:15px;letter-spacing:0.16px;color:#dcdcdc;transform:translate(0.10px,0.50px)">LFO2Wave</div>
<div class="ct" style="left:568px;top:322px;font-size:11.5px;line-height:15px;letter-spacing:-0.01px;color:#dcdcdc;transform:translate(0.35px,0.20px)">TRI</div>
<div class="ct" style="left:697px;top:81px;font-size:9px;line-height:12px;letter-spacing:-0.70px;color:#dfe7e9;transform:translate(0.90px,0.00px)">FX MOD</div>
<div class="ct" style="left:683px;top:109px;font-size:18px;line-height:24px;letter-spacing:-1.25px;color:#ffffff;transform:translate(0.50px,0.50px)">LFO1</div>
<div class="ct" style="left:746px;top:109px;font-size:18px;line-height:24px;letter-spacing:-1.20px;color:#ffffff;transform:translate(0.20px,0.50px)">LFO2</div>
<div class="ct" style="left:685px;top:132px;font-size:11.5px;line-height:15px;letter-spacing:0.00px;color:#e6e6e6;transform:translate(0.66px,0.50px)">A</div>
<div class="ct" style="left:715px;top:132px;font-size:11.5px;line-height:15px;letter-spacing:0.00px;color:#e6e6e6;transform:translate(0.76px,0.50px)">B</div>
<div class="ct" style="left:748px;top:132px;font-size:11.5px;line-height:15px;letter-spacing:0.00px;color:#e6e6e6;transform:translate(0.16px,0.50px)">A</div>
<div class="ct" style="left:778px;top:132px;font-size:11.5px;line-height:15px;letter-spacing:0.00px;color:#e6e6e6;transform:translate(0.96px,0.50px)">B</div>
<div class="ct" style="left:640px;top:152px;font-size:11.5px;line-height:15px;letter-spacing:-0.23px;color:#e6e6e6;transform:translate(0.90px,0.40px)">PreDly</div>
<div class="ct" style="left:641px;top:181px;font-size:11.5px;line-height:15px;letter-spacing:-0.19px;color:#e6e6e6;transform:translate(0.70px,0.45px)">Speed</div>
<div class="ct" style="left:642px;top:210px;font-size:11.5px;line-height:15px;letter-spacing:0.18px;color:#e6e6e6;transform:translate(0.40px,0.50px)">Depth</div>
<div class="ct" style="left:644px;top:239px;font-size:11.5px;line-height:15px;letter-spacing:0.00px;color:#e6e6e6;transform:translate(0.60px,0.55px)">Width</div>
<div class="ct" style="left:628px;top:268px;font-size:11.5px;line-height:15px;letter-spacing:-0.06px;color:#e6e6e6;transform:translate(0.80px,0.60px)">Feedbck</div>
<div class="ct" style="left:652px;top:297px;font-size:11.5px;line-height:15px;letter-spacing:-0.53px;color:#e6e6e6;transform:translate(0.60px,0.65px)">HPF</div>
<div class="ct" style="left:655px;top:326px;font-size:11.5px;line-height:15px;letter-spacing:-0.70px;color:#e6e6e6;transform:translate(0.00px,0.70px)">LPF</div>
<div class="ct" style="left:627px;top:355px;font-size:11.5px;line-height:15px;letter-spacing:-0.03px;color:#e6e6e6;transform:translate(0.60px,0.75px)">Dly Send</div>
<div class="ct" style="left:630px;top:384px;font-size:11.5px;line-height:15px;letter-spacing:-0.06px;color:#e6e6e6;transform:translate(0.30px,0.80px)">Rev Snd</div>
<div class="ct" style="left:634px;top:414px;font-size:11.5px;line-height:15px;letter-spacing:0.12px;color:#e6e6e6;transform:translate(0.90px,0.75px)">Mix Vol</div>
<div class="lb c " style="left:660px;top:451px;width:60px;transform:translate(0.50px,0.20px);letter-spacing:-0.62px">LFO1D1</div>
<div class="lb c " style="left:660px;top:462px;width:60px;transform:translate(0.50px,0.00px)">-128</div>
<div class="lb c " style="left:691px;top:451px;width:60px;transform:translate(0.80px,0.20px);letter-spacing:-0.62px">LFO1D2</div>
<div class="lb c " style="left:691px;top:462px;width:60px;transform:translate(0.80px,0.00px)">-128</div>
<div class="lb c " style="left:723px;top:451px;width:60px;transform:translate(0.20px,0.20px);letter-spacing:-0.62px">LFO2D1</div>
<div class="lb c " style="left:723px;top:462px;width:60px;transform:translate(0.20px,0.00px)">-128</div>
<div class="lb c " style="left:754px;top:451px;width:60px;transform:translate(0.70px,0.20px);letter-spacing:-0.62px">LFO2D2</div>
<div class="lb c " style="left:754px;top:462px;width:60px;transform:translate(0.70px,0.00px)">-128</div>
<div class="ct" style="left:639px;top:479px;font-size:13px;line-height:17px;letter-spacing:-0.66px;color:#b9d3da;transform:translate(0.30px,0.60px)">BIG</div>
<div class="ct" style="left:627px;top:574px;font-size:9px;line-height:12px;letter-spacing:-0.44px;color:#eef6f8;transform:translate(0.55px,0.20px)">EXT In</div>
<div class="ct" style="left:663px;top:574px;font-size:9px;line-height:12px;letter-spacing:-0.39px;color:#eef6f8;transform:translate(0.15px,0.20px)">Chorus</div>
<div class="ct" style="left:702px;top:574px;font-size:9px;line-height:12px;letter-spacing:-0.26px;color:#eef6f8;transform:translate(0.35px,0.20px)">Delay</div>
<div class="ct" style="left:735px;top:574px;font-size:9px;line-height:12px;letter-spacing:-0.12px;color:#eef6f8;transform:translate(0.65px,0.20px)">Reverb</div>
<div class="ct" style="left:778px;top:574px;font-size:9px;line-height:12px;letter-spacing:-0.60px;color:#eef6f8;transform:translate(0.65px,0.20px)">LFO</div>
<div class="ct" style="left:92px;top:41px;font-size:9.5px;line-height:13px;letter-spacing:-0.44px;color:#eef6f8;transform:translate(0.25px,0.00px)">Synth</div>
<div class="ct" style="left:289px;top:41px;font-size:9.5px;line-height:13px;letter-spacing:-0.52px;color:#eef6f8;transform:translate(0.70px,0.00px)">ModMatrix</div>
<div class="ct" style="left:508px;top:41px;font-size:9.5px;line-height:13px;letter-spacing:-0.80px;color:#eef6f8;transform:translate(0.55px,0.00px)">FXs</div>
<div class="ct" style="left:716px;top:41px;font-size:9.5px;line-height:13px;letter-spacing:-0.85px;color:#eef6f8;transform:translate(0.30px,0.00px)">CV</div>
</body></html>
